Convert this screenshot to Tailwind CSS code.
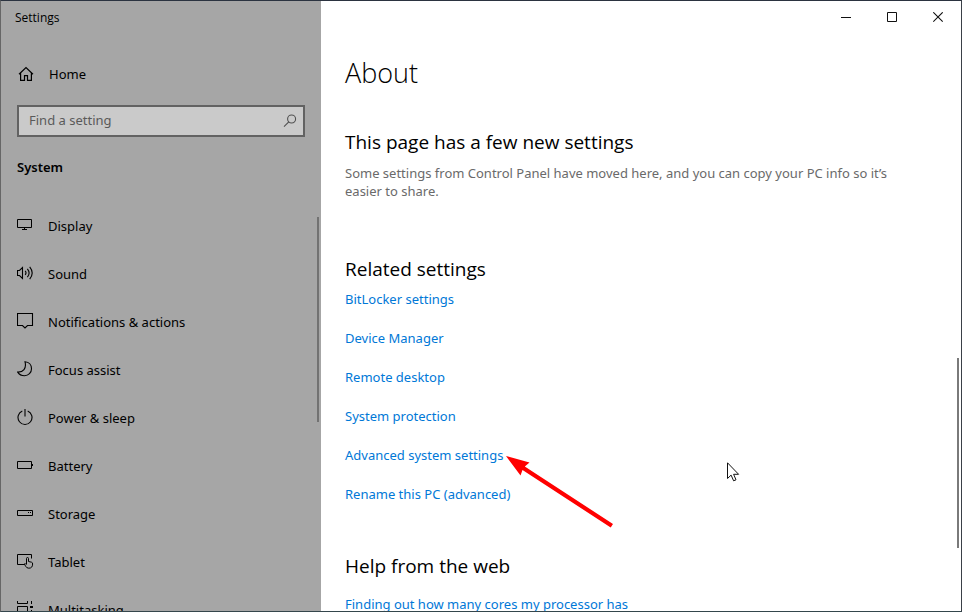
<!DOCTYPE html>
<html lang="en">
<head>
<meta charset="utf-8">
<title>Settings</title>
<script src="https://cdn.jsdelivr.net/npm/@tailwindcss/browser@4"></script>
</head>
<body class="h-screen overflow-hidden bg-white text-[13px] leading-5 text-black font-['Noto_Sans','Open_Sans',sans-serif]">
<div class="relative flex h-full overflow-hidden border border-t-[#2b3340] border-r-[#3a4048] border-b-[#34464c] border-l-[#666666]">

  <aside class="relative flex w-80 shrink-0 flex-col overflow-hidden bg-[#a6a6a6]">
    <div class="flex h-[34px] shrink-0 items-center px-3.5 text-[12px] font-['Open_Sans',sans-serif]">Settings</div>
    <a href="#" class="mt-[19px] flex h-10 shrink-0 items-center gap-[15px] px-[17px]">
      <svg class="size-4" viewBox="0 0 16 16" fill="none" stroke="currentColor" stroke-width="1.2"><path d="M1 8.3 8 1.6l7 6.7M2.6 7v7.4h3.9V9.6h3v4.8h3.9V7"/></svg>
      <span>Home</span>
    </a>
    <div class="mx-4 mt-[11px] flex h-8 shrink-0 items-center border-2 border-[#626262] bg-[#cacaca] pr-[5px] pb-0.5 pl-2.5">
      <input type="text" aria-label="Find a setting" placeholder="Find a setting" class="min-w-0 flex-1 bg-transparent outline-none placeholder:text-[#5a5a5a]">
      <button type="button" aria-label="Search" class="text-[#505050]"><svg class="size-4" viewBox="0 0 16 16" fill="none" stroke="currentColor" stroke-width="1.1"><circle cx="9.6" cy="7" r="4"/><path d="M6.8 9.9 2 14.7"/></svg></button>
    </div>
    <h2 class="mt-5 shrink-0 px-4 font-semibold">System</h2>
    <nav class="mt-[25px] flex flex-col">
      <a href="#" class="flex h-12 shrink-0 items-center gap-[14px] px-4">
        <svg class="mb-0.5 size-[17px]" viewBox="0 0 17 17" fill="none" stroke="currentColor"><path d="M.5 2.5h14v8H.5zM7.5 10.5v2M5 12.5h5"/></svg><span>Display</span></a>
      <a href="#" class="flex h-12 shrink-0 items-center gap-[14px] px-4">
        <svg class="mb-0.5 size-[17px]" viewBox="0 0 17 17" fill="none" stroke="currentColor" stroke-width="1.1"><path d="M.5 5.5h2l3-3v11l-3-3h-2zM8.2 5.8q1.6 2 0 4M10.4 3.8q3.4 4.2 0 8.4M12.7 1.8q5 6.2 0 12.4"/></svg><span>Sound</span></a>
      <a href="#" class="flex h-12 shrink-0 items-center gap-[14px] px-4">
        <svg class="mb-0.5 size-[17px]" viewBox="0 0 17 17" fill="none" stroke="currentColor" stroke-width="1.1"><path d="M.5 .5h15v12h-5L8 15l-2.500-2.500h-5z"/></svg><span>Notifications &amp; actions</span></a>
      <a href="#" class="flex h-12 shrink-0 items-center gap-[14px] px-4">
        <svg class="mb-0.5 size-[17px]" viewBox="0 0 17 17" fill="none" stroke="currentColor" stroke-width="1.1"><path d="M8 .8C12 1 14.500 4 14.500 7.700c0 4-3 7-7 7-3 0-5.300-1.200-6.800-3.600C6 11.300 9.800 7.500 8 .8z"/></svg><span>Focus assist</span></a>
      <a href="#" class="flex h-12 shrink-0 items-center gap-[14px] px-4">
        <svg class="mb-0.5 size-[17px]" viewBox="0 0 17 17" fill="none" stroke="currentColor" stroke-width="1.1"><path d="M5.300 2A7 7 0 1 0 10.700 2M8 0v7.500"/></svg><span>Power &amp; sleep</span></a>
      <a href="#" class="flex h-12 shrink-0 items-center gap-[14px] px-4">
        <svg class="mb-0.5 size-[17px]" viewBox="0 0 17 17" fill="none" stroke="currentColor"><path d="M.5 4.500h14v7H.5zM15.500 7v2"/></svg><span>Battery</span></a>
      <a href="#" class="flex h-12 shrink-0 items-center gap-[14px] px-4">
        <svg class="mb-0.5 size-[17px]" viewBox="0 0 17 17" fill="none" stroke="currentColor"><path d="M.5 5.500h15v5H.5zM11 7.500h1M13 7.500h1"/></svg><span>Storage</span></a>
      <a href="#" class="flex h-12 shrink-0 items-center gap-[14px] px-4">
        <svg class="mb-0.5 size-[17px]" viewBox="0 0 17 17" fill="none" stroke="currentColor"><path d="M7 11.500H.5v-10h14v4"/><path d="M9.500 11V5.500q0-1 1-1t1 1v3l3 .7q1.300.400 1.100 1.800 0 4.200-3.800 4.200-2.200 0-3.200-2L7.300 11q.9-1.200 2.200.8" /></svg><span>Tablet</span></a>
      <a href="#" class="flex h-12 shrink-0 items-center gap-[14px] px-4">
        <svg class="mb-0.5 size-[17px]" viewBox="0 0 17 17" fill="none" stroke="currentColor"><path d="M.5 0v2.500h10V0M.5 16V5.500h10V16M14.500 0v3M14.500 9v7"/><path d="M13 5h3v2h-3z" fill="currentColor" stroke="none"/></svg><span>Multitasking</span></a>
    </nav>
    <div class="absolute top-[216px] right-[2px] h-[205px] w-0.5 bg-[#727272]"></div>
  </aside>

  <main class="relative flex min-w-0 flex-1 flex-col overflow-hidden">
    <div class="flex h-8 shrink-0 justify-end text-[#111]">
      <button type="button" aria-label="Minimize" class="flex w-[46px] items-center justify-center"><svg class="size-[11px]" viewBox="0 0 11 11" stroke="currentColor"><path d="M0 5.500h10"/></svg></button>
      <button type="button" aria-label="Maximize" class="flex w-[46px] items-center justify-center"><svg class="size-[11px]" viewBox="0 0 11 11" fill="none" stroke="currentColor"><path d="M.5.5h9v9h-9z"/></svg></button>
      <button type="button" aria-label="Close" class="flex w-[46px] items-center justify-center"><svg class="size-[11px]" viewBox="0 0 11 11" stroke="currentColor" stroke-width="1.100"><path d="m.3.3 9.400 9.400M9.700.3.3 9.700"/></svg></button>
    </div>
    <div class="px-6">
      <h1 class="mt-5 text-[27px] leading-10 font-light font-['Open_Sans',sans-serif]">About</h1>
      <section class="mt-[35px]">
        <h2 class="text-[19px] leading-7 font-['Open_Sans',sans-serif]">This page has a few new settings</h2>
        <p class="mt-2 max-w-[570px] leading-[18px] text-[#6a6a6a]">Some settings from Control Panel have moved here, and you can copy your PC info so it’s easier to share.</p>
      </section>
      <section class="mt-[55px]">
        <h2 class="text-[19px] leading-7 font-['Open_Sans',sans-serif]">Related settings</h2>
        <ul class="mt-1.5 flex flex-col items-start gap-[19px] text-[#0078d7]">
          <li><a href="#">BitLocker settings</a></li>
          <li><a href="#">Device Manager</a></li>
          <li><a href="#">Remote desktop</a></li>
          <li><a href="#">System protection</a></li>
          <li><a href="#">Advanced system settings</a></li>
          <li><a href="#">Rename this PC (advanced)</a></li>
        </ul>
      </section>
      <section class="mt-12">
        <h2 class="text-[19px] leading-7 font-['Open_Sans',sans-serif]">Help from the web</h2>
        <a href="#" class="mt-3.5 block text-[#0078d7]">Finding out how many cores my processor has</a>
      </section>
    </div>
    <div class="absolute top-[357px] right-[2px] h-[190px] w-0.5 bg-[#7a7a7a]"></div>
  </main>

  <svg class="absolute top-[454px] left-[504px] h-[74px] w-[112px]" viewBox="505 455 112 74"><path d="M506 456 529.500 462.500 524.800 466.500 613 524 610.700 527.500 522.500 470 520.500 475.500z" fill="#ff0000"/></svg>
  <svg class="absolute top-[461px] left-[726px] h-5 w-[13px]" viewBox="0 0 13 20"><path d="M.5.800v15.700l3.600-3.400 2.500 5.700 2.400-1-2.400-5.500h5z" fill="#fff" stroke="#111"/></svg>
</div>
</body>
</html>
